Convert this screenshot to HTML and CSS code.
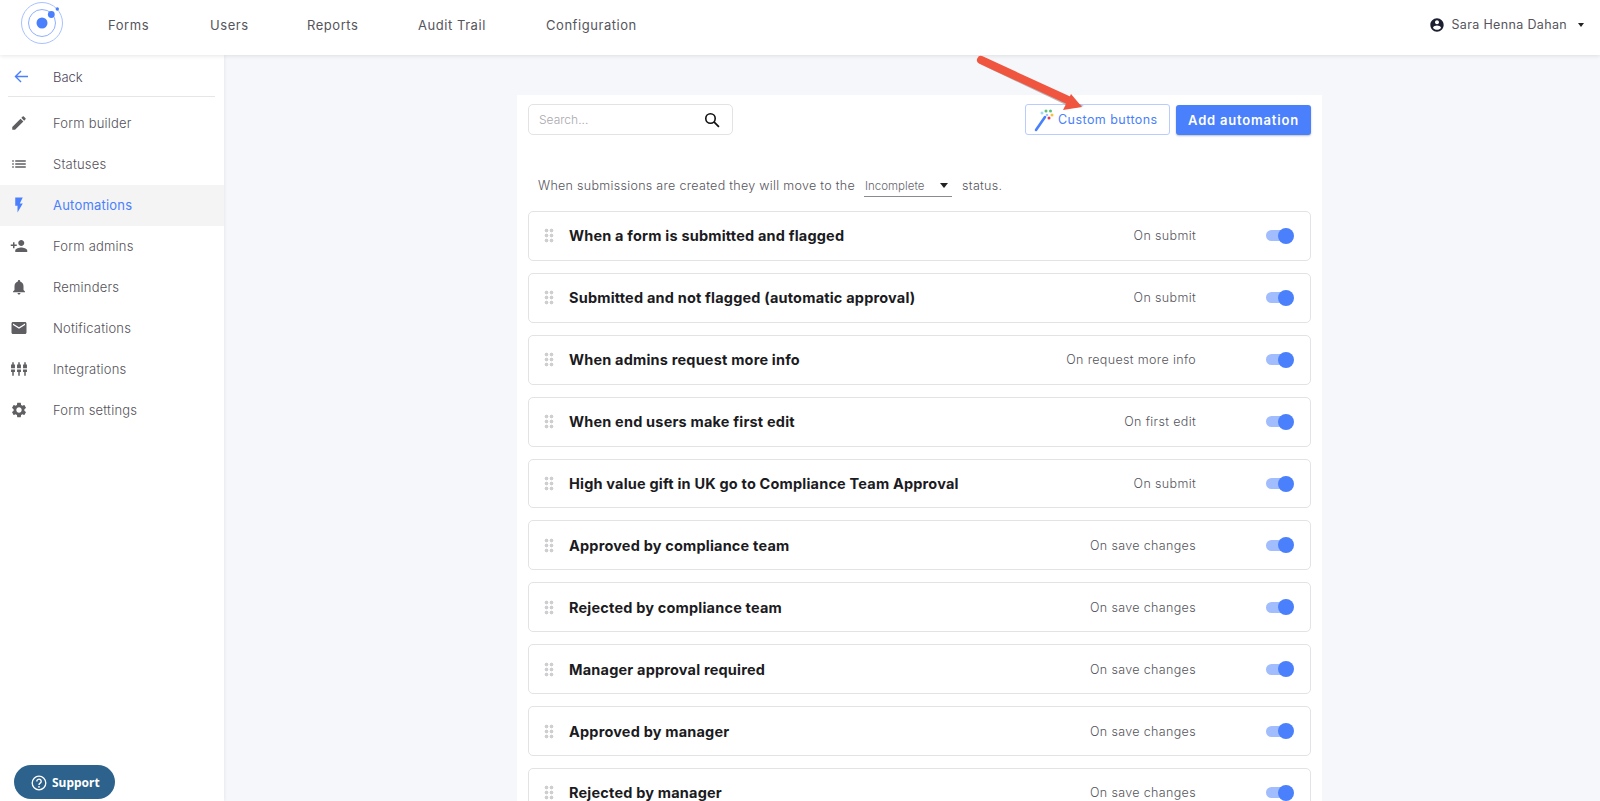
FILE: index.html
```html
<!DOCTYPE html>
<html lang="en">
<head>
<meta charset="utf-8">
<title>Automations</title>
<link rel="stylesheet" href="styles.css">
</head>
<body>
<div class="app">
  <header class="topbar">
    <svg class="logo" viewBox="0 0 46 46" width="46" height="46">
      <circle cx="22" cy="23" r="20.5" fill="none" stroke="#a9c2ff" stroke-width="1"/>
      <circle cx="22" cy="23" r="13.500" fill="none" stroke="#8fb0ff" stroke-width="1"/>
      <circle cx="22" cy="23" r="5.500" fill="#4a80fc"/>
      <circle cx="31.300" cy="14.500" r="3.400" fill="#4a80fc"/>
      <circle cx="37.300" cy="9" r="1.700" fill="#4a80fc"/>
    </svg>
    <nav class="mainnav">
      <a class="nav-forms">Forms</a>
      <a class="nav-users">Users</a>
      <a class="nav-reports">Reports</a>
      <a class="nav-audit">Audit Trail</a>
      <a>Configuration</a>
    </nav>
    <div class="user">
      <svg viewBox="0 0 24 24" width="16" height="16"><path fill="#1c2030" d="M12 2C6.48 2 2 6.48 2 12s4.48 10 10 10 10-4.48 10-10S17.52 2 12 2zm0 3c1.66 0 3 1.34 3 3s-1.34 3-3 3-3-1.34-3-3 1.34-3 3-3zm0 14.2c-2.5 0-4.71-1.28-6-3.22.03-1.99 4-3.08 6-3.08 1.99 0 5.97 1.09 6 3.08-1.29 1.94-3.5 3.22-6 3.22z"/></svg>
      <span class="user-name">Sara Henna Dahan</span>
      <span class="user-caret"></span>
    </div>
  </header>
  <div class="body">
    <aside class="sidebar">
      <a class="back">
        <svg viewBox="0 0 16 14" width="15" height="13"><path fill="none" stroke="#4a80fc" stroke-width="1.500" d="M15 7H1.500M7.500 1L1.500 7l6 6"/></svg>
        <span>Back</span>
      </a>
      <ul class="menu">
        <li class="item"><svg viewBox="0 0 24 24"><path d="M3 17.25V21h3.75L17.81 9.94l-3.75-3.75L3 17.25zM20.71 7.04c.39-.39.39-1.02 0-1.41l-2.34-2.34c-.39-.39-1.02-.39-1.41 0l-1.83 1.83 3.75 3.75 1.83-1.83z"/></svg><span>Form builder</span></li>
        <li class="item"><svg viewBox="0 0 24 24"><path d="M3 13h2v-2H3v2zm0 4h2v-2H3v2zm0-8h2V7H3v2zm4 4h14v-2H7v2zm0 4h14v-2H7v2zM7 7v2h14V7H7z"/></svg><span>Statuses</span></li>
        <li class="item active"><svg viewBox="0 0 24 24"><path d="M7 2v11h3v9l7-12h-4l4-8z"/></svg><span>Automations</span></li>
        <li class="item"><svg viewBox="0 0 24 24"><path d="M15 12c2.21 0 4-1.79 4-4s-1.79-4-4-4-4 1.79-4 4 1.79 4 4 4zm-9-2V7H4v3H1v2h3v3h2v-3h3v-2H6zm9 4c-2.67 0-8 1.34-8 4v2h16v-2c0-2.66-5.33-4-8-4z"/></svg><span>Form admins</span></li>
        <li class="item"><svg viewBox="0 0 24 24"><path d="M12 22c1.1 0 2-.9 2-2h-4c0 1.1.89 2 2 2zm6-6v-5c0-3.07-1.64-5.64-4.5-6.32V4c0-.83-.67-1.5-1.5-1.5s-1.5.67-1.5 1.5v.68C7.63 5.36 6 7.92 6 11v5l-2 2v1h16v-1l-2-2z"/></svg><span>Reminders</span></li>
        <li class="item"><svg viewBox="0 0 24 24"><path d="M20 4H4c-1.1 0-1.99.9-1.99 2L2 18c0 1.1.9 2 2 2h16c1.1 0 2-.9 2-2V6c0-1.1-.9-2-2-2zm0 4l-8 5-8-5V6l8 5 8-5v2z"/></svg><span>Notifications</span></li>
        <li class="item"><svg viewBox="0 0 24 24"><path d="M3 3h2v3h1.600v5H1.400V6H3zM11 3h2v3h1.600v5H9.400V6H11zM19 3h2v3h1.600v5h-5.200V6H19zM1.400 12.500h5.200V16H5v5H3v-5H1.400zM9.400 12.500h5.200V16H13v5h-2v-5H9.400zM17.400 12.500h5.200V16H21v5h-2v-5h-1.600z"/></svg><span>Integrations</span></li>
        <li class="item"><svg viewBox="0 0 24 24"><path d="M19.14 12.94c.04-.3.06-.61.06-.94 0-.32-.02-.64-.07-.94l2.03-1.58c.18-.14.23-.41.12-.61l-1.92-3.32c-.12-.22-.37-.29-.59-.22l-2.39.96c-.5-.38-1.03-.7-1.62-.94l-.36-2.54c-.04-.24-.24-.41-.48-.41h-3.84c-.24 0-.43.17-.47.41l-.36 2.54c-.59.24-1.13.57-1.62.94l-2.39-.96c-.22-.08-.47 0-.59.22L2.74 8.87c-.12.21-.08.47.12.61l2.03 1.58c-.05.3-.09.63-.09.94s.02.64.07.94l-2.03 1.58c-.18.14-.23.41-.12.61l1.92 3.32c.12.22.37.29.59.22l2.39-.96c.5.38 1.03.7 1.62.94l.36 2.54c.05.24.24.41.48.41h3.84c.24 0 .44-.17.47-.41l.36-2.54c.59-.24 1.13-.56 1.62-.94l2.39.96c.22.08.47 0 .59-.22l1.92-3.32c.12-.22.07-.47-.12-.61l-2.01-1.58zM12 15.6c-1.98 0-3.6-1.62-3.6-3.6s1.62-3.6 3.6-3.6 3.6 1.62 3.6 3.6-1.62 3.6-3.6 3.6z"/></svg><span>Form settings</span></li>
      </ul>
      <button class="support">
        <svg viewBox="0 0 16 16" width="16" height="16"><circle cx="8" cy="8" r="6.800" fill="none" stroke="#fff" stroke-width="1.300"/><path fill="none" stroke="#fff" stroke-width="1.400" d="M5.800 6.400a2.200 2.200 0 1 1 3.400 1.800c-.8.500-1.200.9-1.200 1.800"/><circle cx="8" cy="11.800" r=".9" fill="#fff"/></svg>
        <span>Support</span>
      </button>
    </aside>
    <main class="content">
      <section class="card">
        <div class="toolbar">
          <div class="search">
            <span class="search-ph">Search...</span>
            <svg viewBox="0 0 18 18" width="16" height="16"><circle cx="7.300" cy="7.300" r="5.300" fill="none" stroke="#111" stroke-width="1.800"/><path stroke="#111" stroke-width="2" d="M11.200 11.200l5.600 5.600"/></svg>
          </div>
          <div class="actions">
            <button class="btn-custom">
              <svg viewBox="0 0 20 24" width="20" height="24">
                <path stroke="#4a80fc" stroke-width="2.600" stroke-linecap="round" d="M2 22L11 9"/>
                <circle cx="8" cy="5" r="1.500" fill="#a5d8f5"/><circle cx="12" cy="3" r="1.500" fill="#57c278"/><circle cx="16.500" cy="3" r="1.500" fill="#57c278"/><circle cx="13" cy="7" r="1.300" fill="#a5c2ff"/><circle cx="18" cy="7" r="1.500" fill="#f5c33b"/><circle cx="15" cy="10" r="1.500" fill="#e5395a"/>
              </svg>
              <span>Custom buttons</span>
            </button>
            <button class="btn-add">Add automation</button>
          </div>
        </div>
        <div class="status-line">
          <span>When submissions are created they will move to the</span>
          <span class="select"><span>Incomplete</span><i class="select-caret"></i></span>
          <span>status.</span>
        </div>
        <div class="rows">
          <div class="row"><span class="grip"></span><span class="row-title">When a form is submitted and flagged</span><span class="row-trigger">On submit</span><span class="toggle"></span></div>
          <div class="row"><span class="grip"></span><span class="row-title">Submitted and not flagged (automatic approval)</span><span class="row-trigger">On submit</span><span class="toggle"></span></div>
          <div class="row"><span class="grip"></span><span class="row-title">When admins request more info</span><span class="row-trigger">On request more info</span><span class="toggle"></span></div>
          <div class="row"><span class="grip"></span><span class="row-title">When end users make first edit</span><span class="row-trigger">On first edit</span><span class="toggle"></span></div>
          <div class="row"><span class="grip"></span><span class="row-title">High value gift in UK go to Compliance Team Approval</span><span class="row-trigger">On submit</span><span class="toggle"></span></div>
          <div class="row"><span class="grip"></span><span class="row-title">Approved by compliance team</span><span class="row-trigger">On save changes</span><span class="toggle"></span></div>
          <div class="row"><span class="grip"></span><span class="row-title">Rejected by compliance team</span><span class="row-trigger">On save changes</span><span class="toggle"></span></div>
          <div class="row"><span class="grip"></span><span class="row-title">Manager approval required</span><span class="row-trigger">On save changes</span><span class="toggle"></span></div>
          <div class="row"><span class="grip"></span><span class="row-title">Approved by manager</span><span class="row-trigger">On save changes</span><span class="toggle"></span></div>
          <div class="row"><span class="grip"></span><span class="row-title">Rejected by manager</span><span class="row-trigger">On save changes</span><span class="toggle"></span></div>
        </div>
      </section>
    </main>
  </div>
  <svg class="arrow" viewBox="0 0 110 62" width="110" height="62">
    <path fill="#5a4a45" opacity=".4" d="M6 13L90 53l8 3 10-2-14-6z"/>
    <path stroke="#f0553f" stroke-width="8" stroke-linecap="round" d="M5 8L92 48"/>
    <path fill="#f0553f" d="M95 42L106 55 87 58z"/>
  </svg>
</div>
</body>
</html>
```
FILE: styles.css
```css
* { box-sizing: border-box; }
html, body { margin: 0; height: 100%; overflow: hidden; }
body { font-family: Inter, "Liberation Sans", sans-serif; color: #4a4a55; background: #f6f7fb; }
.app { position: relative; height: 801px; display: flex; flex-direction: column; overflow: hidden; }

.topbar { flex: 0 0 55px; height: 55px; display: flex; align-items: center; background: #fff; padding: 0 20px; box-shadow: 0 1px 4px rgba(0,0,0,.1); position: relative; z-index: 2; }
.logo { flex: none; margin-bottom: 9px; }
.mainnav { display: flex; margin-left: 42px; font-size: 13px; letter-spacing: .55px; color: #55555d; margin-top: -6px; }
.mainnav a { display: block; }
.nav-forms { width: 102px; }
.nav-users { width: 97px; }
.nav-reports { width: 111px; }
.nav-audit { width: 128px; }
.user { margin-left: auto; display: flex; align-items: center; font-size: 12.5px; letter-spacing: .35px; margin-top: -6px; margin-right: -4px; color: #55555d; }
.user-name { margin-left: 6px; }
.user-caret { margin-left: 11px; width: 0; height: 0; border: 3.5px solid transparent; border-top: 4px solid #222; border-bottom: 0; }

.body { flex: 1; display: flex; min-height: 0; }
.sidebar { flex: 0 0 224px; width: 224px; background: #fff; position: relative; box-shadow: 1px 0 3px rgba(0,0,0,.06); }
.back { display: flex; align-items: center; height: 42px; margin: 0 9px 0 8px; padding: 2px 0 0 6px; font-size: 13px; font-weight: 300; color: #4c4458; border-bottom: 1px solid #e6e6e8; }
.back span { margin-left: 24px; }
.menu { list-style: none; margin: 0; padding: 6px 0 0; }
.item { display: flex; align-items: center; height: 41px; padding: 0 0 1px 10px; font-size: 13px; font-weight: 300; letter-spacing: .2px; color: #55525a; }
.item svg { width: 18px; height: 18px; fill: #5f5f63; flex: none; }
.item span { margin-left: 25px; }
.active { background: #f4f4f5; color: #4a80fc; font-weight: 400; }
.active svg { fill: #4a80fc; }
.support { position: absolute; left: 14px; bottom: 2px; width: 101px; height: 34px; display: flex; align-items: center; padding: 1px 0 0 17px; border: 0; border-radius: 17px; background: #2c628c; color: #fff; font-family: "Noto Sans", sans-serif; font-weight: 700; font-size: 12px; }
.support span { margin-left: 5px; }

.content { flex: 1; display: flex; justify-content: center; padding: 40px 56px 0 71px; min-width: 0; }
.card { width: 805px; background: #fff; padding: 9px 11px 0; flex: none; }
.toolbar { display: flex; justify-content: space-between; align-items: center; height: 31px; }
.search { width: 205px; height: 31px; display: flex; align-items: center; justify-content: space-between; padding: 0 12px 0 10px; background: #fff; border: 1px solid #e3e3e6; border-radius: 5px; }
.search-ph { font-size: 12px; font-weight: 300; color: #a8a8ae; }
.actions { display: flex; gap: 6px; align-items: center; }
.btn-custom { width: 145px; height: 31px; display: flex; align-items: center; padding: 0 0 0 8px; background: #fff; border: 1px solid #b8cdfd; border-radius: 3px; color: #4a80fc; font: 12.500px Inter, sans-serif; letter-spacing: .45px; }
.btn-custom span { margin-left: 4px; }
.btn-add { width: 135px; height: 30px; border: 0; border-radius: 3px; background: #4a80fc; color: #fff; font: 600 13px Inter, sans-serif; letter-spacing: .8px; box-shadow: 0 1px 2px rgba(0,0,0,.25); }

.status-line { display: flex; align-items: center; height: 32px; margin-top: 34px; padding-left: 10px; font-size: 12.500px; font-weight: 300; letter-spacing: .3px; color: #55555d; }
.select { width: 88px; height: 23px; margin: 0 10px 0 9px; padding: 2px 0 0 1px; display: flex; align-items: center; justify-content: space-between; font-size: 11.500px; letter-spacing: 0; color: #66666d; border-bottom: 1px solid #8a8a90; }
.select-caret { width: 0; height: 0; margin-right: 4px; border: 4.500px solid transparent; border-top: 5px solid #222; border-bottom: 0; }

.rows { display: flex; flex-direction: column; gap: 12px; margin-top: 10px; }
.row { flex: none; height: 49.900px; display: flex; align-items: center; padding: 0 15px; background: #fff; border: 1px solid #e3e3e6; border-radius: 5px; }
.grip { width: 10px; height: 15px; flex: none; background-image: radial-gradient(circle, #cfcfd2 1.800px, transparent 2.100px); background-size: 5px 5px; }
.row-title { margin-left: 15px; font-size: 14.500px; letter-spacing: .19px; font-weight: 700; color: #1b1b22; }
.row-trigger { margin-left: auto; font-size: 12.500px; font-weight: 300; letter-spacing: .35px; color: #55555d; }
.toggle { position: relative; width: 27px; height: 11px; margin-left: 70px; margin-right: 2px; background: #a2bdfd; border-radius: 6px; }
.toggle::after { content: ""; position: absolute; right: -1px; top: -2.500px; width: 16px; height: 16px; border-radius: 50%; background: #4a80fc; }

.arrow { position: absolute; left: 976px; top: 52px; z-index: 3; }
```
